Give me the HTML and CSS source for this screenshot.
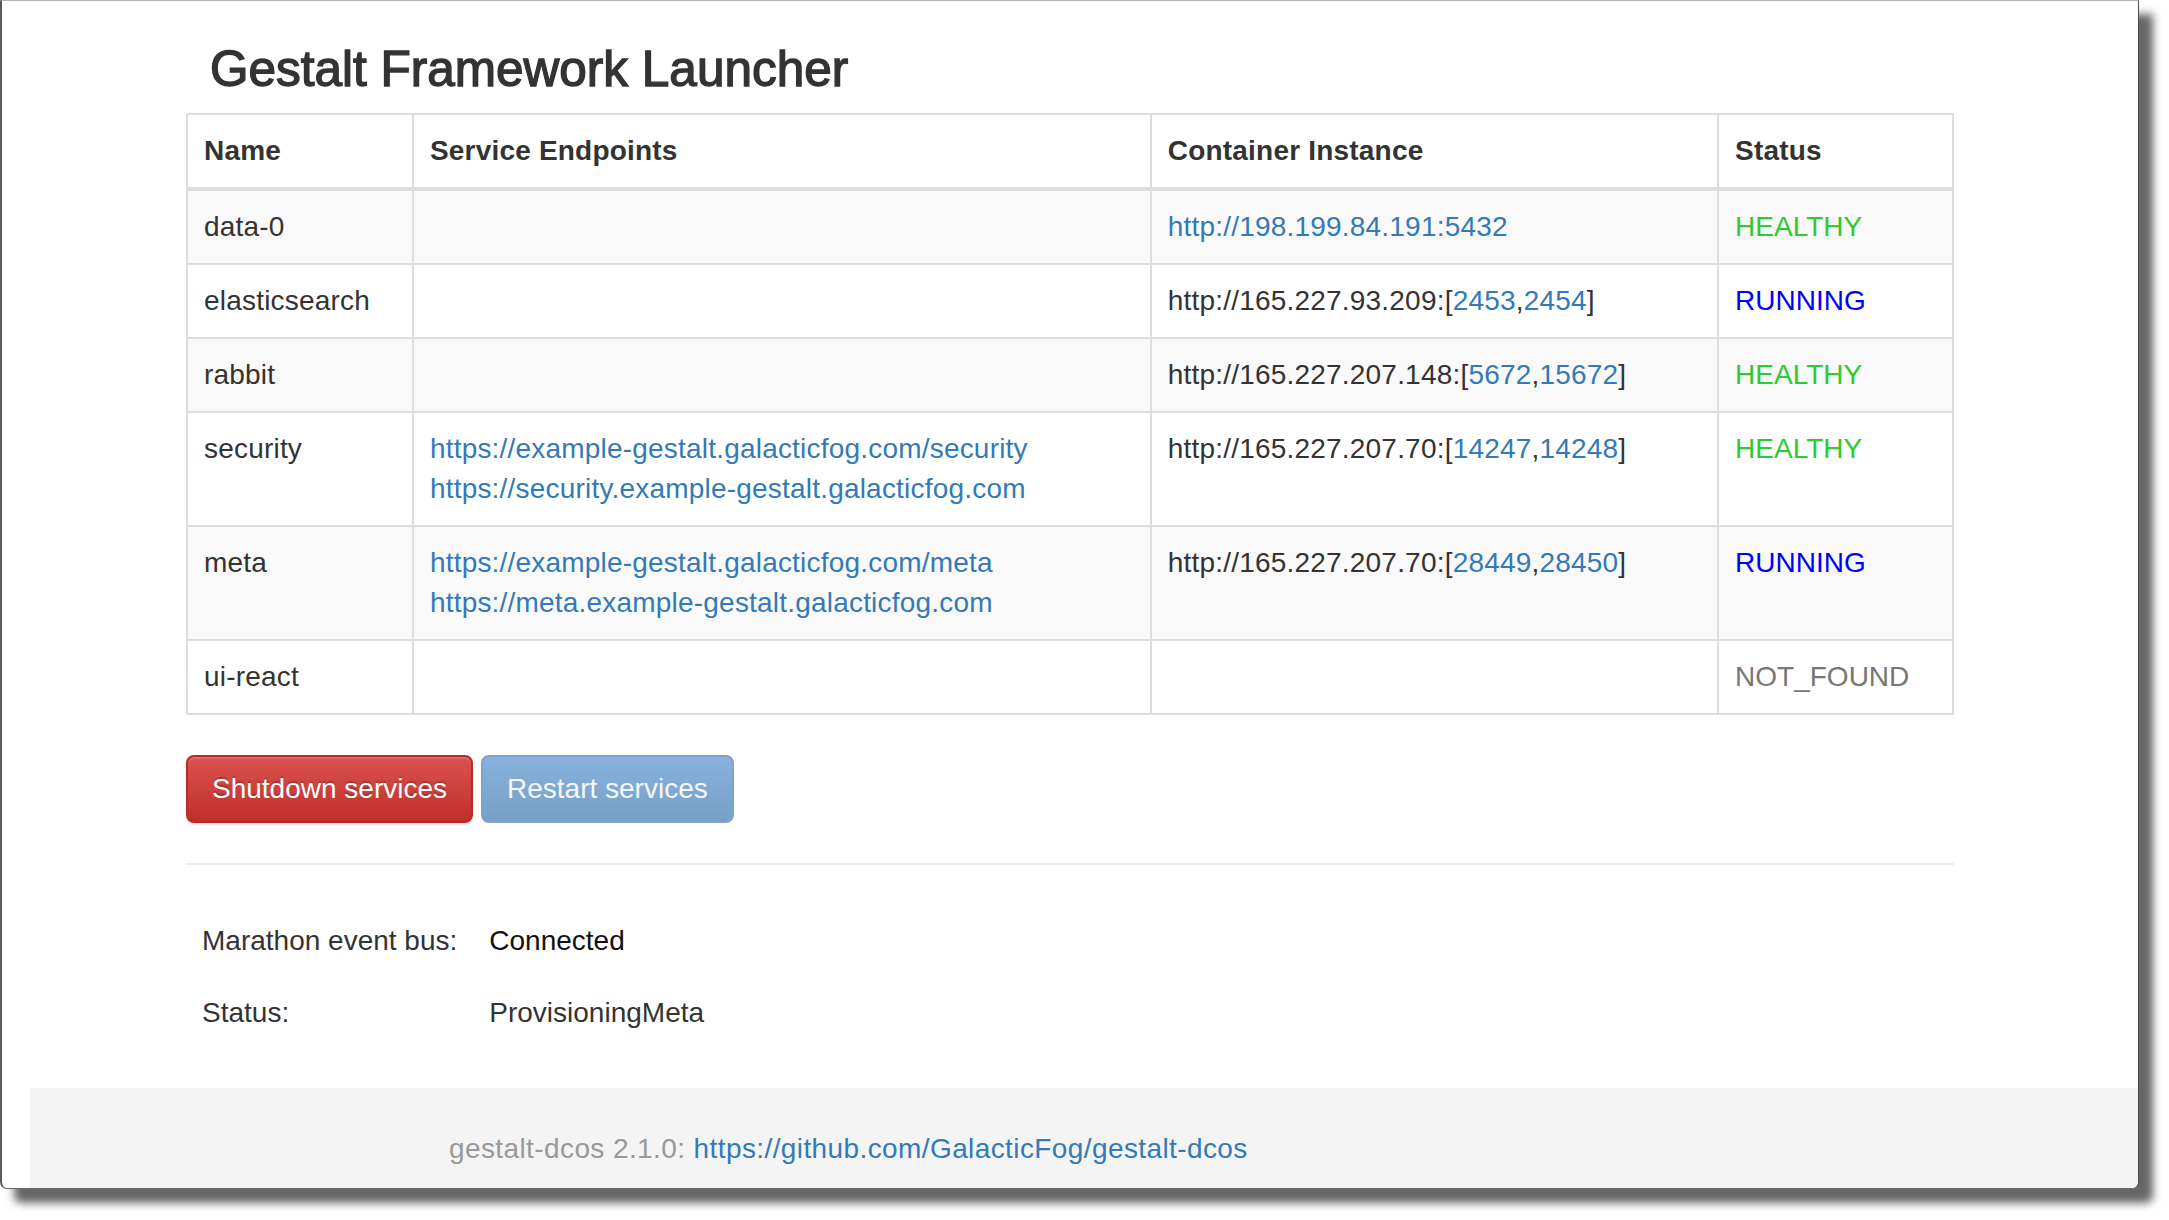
FILE: index.html
```html
<!DOCTYPE html>
<html lang="en">
<head>
<meta charset="utf-8">
<title>Gestalt Framework Launcher</title>
<link rel="stylesheet" href="styles.css">
</head>
<body>
<div class="window">
  <div class="main">
    <h3 class="title">Gestalt Framework Launcher</h3>
    <table class="services">
      <colgroup>
        <col class="c-name">
        <col class="c-endpoints">
        <col class="c-container">
        <col class="c-status">
      </colgroup>
      <thead>
        <tr><th>Name</th><th>Service Endpoints</th><th>Container Instance</th><th>Status</th></tr>
      </thead>
      <tbody>
        <tr>
          <td>data-0</td>
          <td></td>
          <td><a href="#">http://198.199.84.191:5432</a></td>
          <td class="st-healthy">HEALTHY</td>
        </tr>
        <tr>
          <td>elasticsearch</td>
          <td></td>
          <td>http://165.227.93.209:[<a href="#">2453</a>,<a href="#">2454</a>]</td>
          <td class="st-running">RUNNING</td>
        </tr>
        <tr>
          <td>rabbit</td>
          <td></td>
          <td>http://165.227.207.148:[<a href="#">5672</a>,<a href="#">15672</a>]</td>
          <td class="st-healthy">HEALTHY</td>
        </tr>
        <tr>
          <td>security</td>
          <td>
            <a class="ep" href="#">https://example-gestalt.galacticfog.com/security</a>
            <a class="ep" href="#">https://security.example-gestalt.galacticfog.com</a>
          </td>
          <td>http://165.227.207.70:[<a href="#">14247</a>,<a href="#">14248</a>]</td>
          <td class="st-healthy">HEALTHY</td>
        </tr>
        <tr>
          <td>meta</td>
          <td>
            <a class="ep" href="#">https://example-gestalt.galacticfog.com/meta</a>
            <a class="ep" href="#">https://meta.example-gestalt.galacticfog.com</a>
          </td>
          <td>http://165.227.207.70:[<a href="#">28449</a>,<a href="#">28450</a>]</td>
          <td class="st-running">RUNNING</td>
        </tr>
        <tr>
          <td>ui-react</td>
          <td></td>
          <td></td>
          <td class="st-missing">NOT_FOUND</td>
        </tr>
      </tbody>
    </table>

    <div class="actions">
      <button class="btn btn-danger" type="button">Shutdown services</button>
      <button class="btn btn-primary" type="button" disabled>Restart services</button>
    </div>

    <hr class="divider">

    <table class="info">
      <tr><td class="label">Marathon event bus:</td><td class="value strong">Connected</td></tr>
      <tr><td class="label">Status:</td><td class="value">ProvisioningMeta</td></tr>
    </table>
  </div>

  <footer class="footer">
    <span class="muted">gestalt-dcos 2.1.0: </span><a href="#">https://github.com/GalacticFog/gestalt-dcos</a>
  </footer>
</div>
</body>
</html>
```

FILE: styles.css
```css
html, body {
  margin: 0;
  padding: 0;
  background: #ffffff;
}

body {
  min-height: 1220px;
  font-family: "Liberation Sans", Arial, Helvetica, sans-serif;
  font-size: 28px;
  line-height: 40px;
  color: #333333;
  letter-spacing: 0.2px;
}

.window {
  box-sizing: border-box;
  width: 2139px;
  height: 1189px;
  overflow: hidden;
  background: #ffffff;
  border-top: 1px solid #b4b4b4;
  border-left: 2px solid #5a5a5a;
  border-right: 1px solid #4a4a4a;
  border-bottom: 1px solid #6a6a6a;
  border-radius: 0 0 7px 7px;
  box-shadow: 14px 14px 8px rgba(0, 0, 0, 0.6);
}

.main {
  width: 1768px;
  margin: 0 auto;
  padding-top: 41px;
}

.title {
  margin: 0 0 17px;
  padding-left: 24px;
  font-size: 49.5px;
  line-height: 54px;
  font-weight: 400;
  letter-spacing: 0;
  -webkit-text-stroke: 1.4px #333333;
  color: #333333;
}

a {
  color: #337ab7;
  text-decoration: none;
}

.services {
  width: 1768px;
  border-collapse: collapse;
  border: 2px solid #dddddd;
}

.c-name { width: 226px; }
.c-endpoints { width: 739px; }
.c-container { width: 568px; }
.c-status { width: 235px; }

.services th,
.services td {
  border: 2px solid #dddddd;
  padding: 16px;
  text-align: left;
  vertical-align: top;
  line-height: 40px;
}

.services th {
  font-weight: 700;
  border-bottom-width: 4px;
}

.services tbody tr:nth-child(odd) {
  background: #f9f9f9;
}

.ep {
  display: block;
}

.st-healthy { color: #2ecb2e; letter-spacing: 0; }
.st-running { color: #0000ff; letter-spacing: 0; }
.st-missing { color: #777777; letter-spacing: 0; }

.actions {
  display: flex;
  gap: 8px;
  margin-top: 40px;
}

.btn {
  font-family: inherit;
  font-size: 28px;
  line-height: 40px;
  letter-spacing: 0;
  padding: 12px 24px;
  border: 2px solid transparent;
  border-radius: 8px;
  color: #ffffff;
  cursor: pointer;
}

.btn-danger {
  background: linear-gradient(to bottom, #d9534f 0%, #c12e2a 100%);
  border-color: #b92c28;
  text-shadow: 0 -2px 0 rgba(0, 0, 0, 0.2);
  box-shadow: inset 0 2px 0 rgba(255, 255, 255, 0.15), 0 2px 2px rgba(0, 0, 0, 0.1);
}

.btn-primary {
  background: linear-gradient(to bottom, #86b2dd 0%, #78a0c6 100%);
  border-color: #7ca4cc;
  color: #f4f8fc;
  cursor: not-allowed;
}

.divider {
  margin: 40px 0;
  border: 0;
  border-top: 2px solid #eeeeee;
}

.info {
  border-collapse: collapse;
  margin-bottom: 39px;
  letter-spacing: 0;
}

.info td {
  padding: 16px;
  line-height: 40px;
  vertical-align: top;
}

.info .label { color: #333333; }
.info .value { color: #333333; }
.info .strong { color: #111111; }

.footer {
  margin-left: 28px;
  height: 200px;
  padding: 41px 0 0 419px;
  background: #f4f4f4;
  line-height: 40px;
  letter-spacing: 0.4px;
}

.muted {
  color: #999999;
}
```
